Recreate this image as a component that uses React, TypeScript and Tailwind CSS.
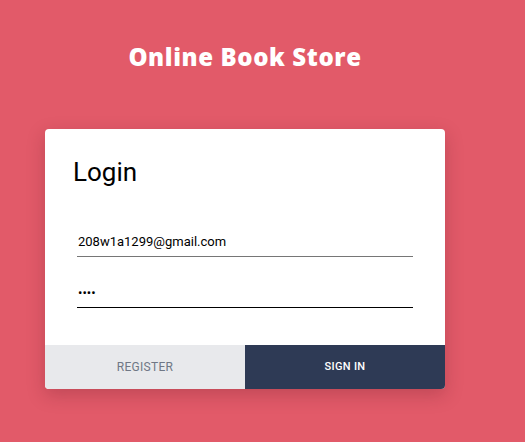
import { useState } from "react";

export default function App() {
    const [email, setEmail] = useState("208w1a1299@gmail.com");
    const [password, setPassword] = useState("1234");

    return (
        <div className="min-h-[442px] w-full bg-[#e25a69] pt-[39px] pl-[45px] font-['Roboto',sans-serif]">
            <div className="w-[400px]">
                <h1 className="text-center text-[24px] leading-[36px] font-extrabold text-white font-['Open_Sans',sans-serif] tracking-[0.6px]">
                    Online Book Store
                </h1>

                <div className="mt-[54px] rounded-[4px] bg-white overflow-hidden shadow-[0_6px_18px_rgba(90,20,30,0.25)]">
                    <div className="px-[28px] pt-[28px] pb-[37px]">
                        <h2 className="text-[26px] leading-[30px] text-black">Login</h2>

                        <div className="mt-[38px] pl-[4px] pr-[4px]">
                            <input
                                type="email"
                                value={email}
                                onChange={(e) => setEmail(e.target.value)}
                                className="w-full h-[32px] pt-[2px] border-b border-[#767676] text-[13px] text-black outline-none bg-transparent px-[1px]"
                            />
                            <input
                                type="password"
                                value={password}
                                onChange={(e) => setPassword(e.target.value)}
                                className="mt-[19px] w-full h-[32px] pt-[2px] border-b border-black text-[13px] text-black outline-none bg-transparent px-[1px]"
                            />
                        </div>
                    </div>

                    <div className="grid grid-cols-2 h-[44px]">
                        <button className="bg-[#e8e9ec] text-[#6f7785] text-[12px] tracking-[0.3px]">
                            REGISTER
                        </button>
                        <button className="bg-[#2e3a55] text-white text-[11px] font-medium tracking-[0.3px]">
                            SIGN IN
                        </button>
                    </div>
                </div>
            </div>
        </div>
    );
}
